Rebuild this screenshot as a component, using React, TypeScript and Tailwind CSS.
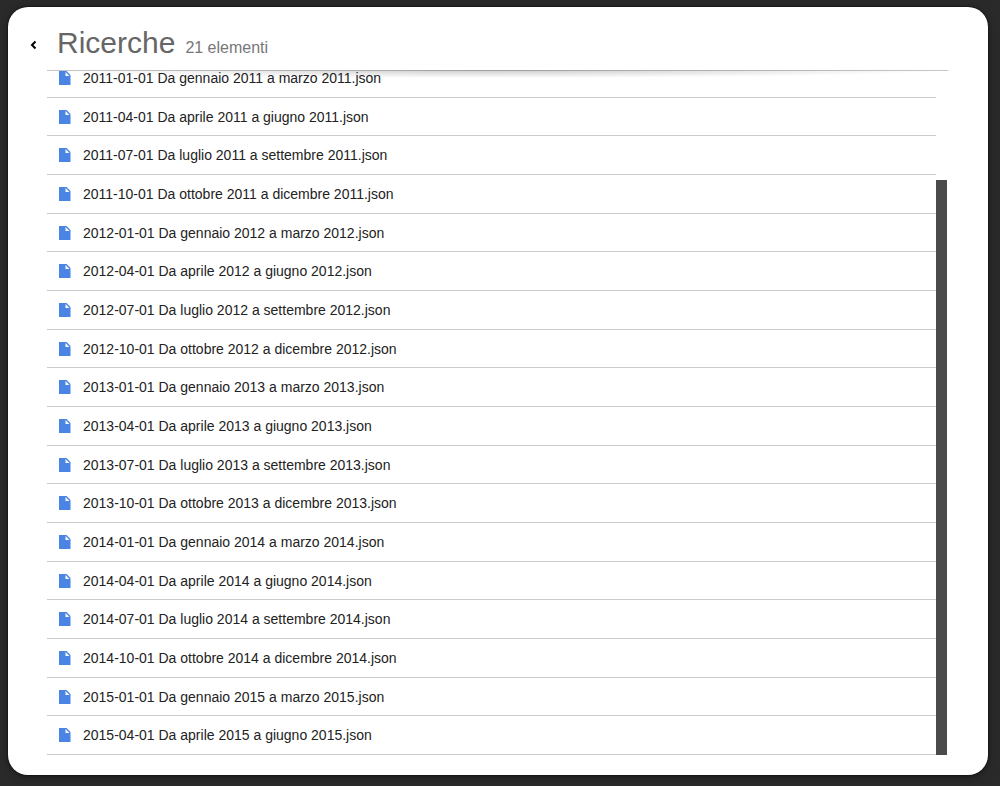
const files = [
  "2011-01-01 Da gennaio 2011 a marzo 2011.json",
  "2011-04-01 Da aprile 2011 a giugno 2011.json",
  "2011-07-01 Da luglio 2011 a settembre 2011.json",
  "2011-10-01 Da ottobre 2011 a dicembre 2011.json",
  "2012-01-01 Da gennaio 2012 a marzo 2012.json",
  "2012-04-01 Da aprile 2012 a giugno 2012.json",
  "2012-07-01 Da luglio 2012 a settembre 2012.json",
  "2012-10-01 Da ottobre 2012 a dicembre 2012.json",
  "2013-01-01 Da gennaio 2013 a marzo 2013.json",
  "2013-04-01 Da aprile 2013 a giugno 2013.json",
  "2013-07-01 Da luglio 2013 a settembre 2013.json",
  "2013-10-01 Da ottobre 2013 a dicembre 2013.json",
  "2014-01-01 Da gennaio 2014 a marzo 2014.json",
  "2014-04-01 Da aprile 2014 a giugno 2014.json",
  "2014-07-01 Da luglio 2014 a settembre 2014.json",
  "2014-10-01 Da ottobre 2014 a dicembre 2014.json",
  "2015-01-01 Da gennaio 2015 a marzo 2015.json",
  "2015-04-01 Da aprile 2015 a giugno 2015.json",
];

const TOTAL = 21;

const FileIcon = () => (
  <svg width="12" height="14" viewBox="0 0 12 14" className="shrink-0" aria-hidden="true">
    <path d="M0 0h7.500l4 4v10H0z" fill="#4a84e4" />
    <path d="M6.500 1v4h4z" fill="#fff" />
  </svg>
);

const FileRow = ({ name }: { name: string }) => (
  <li className="flex flex-1 border-b border-[#cbcbcb]">
    <a href="#" className="flex flex-1 items-center gap-3 pl-3">
      <FileIcon />
      <span className="whitespace-nowrap">{name}</span>
    </a>
  </li>
);

const App = () => {
  return (
    <div className="flex h-screen bg-[#2a2a2a] pt-[7px] pr-3 pb-[11px] pl-2 font-['Liberation_Sans',Arial,sans-serif]">
      <main className="flex flex-1 flex-col rounded-[20px] bg-white pr-10 pb-5 pl-[39px] shadow-[0_0_2px_#000,0_2px_8px_rgba(0,0,0,0.4)]">
        <header className="relative z-10 flex h-16 shrink-0 items-center border-b border-[#c6c6c6] pt-3">
          <button
            type="button"
            aria-label="Indietro"
            className="-ml-5 flex h-6 w-5 items-center"
          >
            <svg width="12" height="10" viewBox="0 0 12 10" aria-hidden="true">
              <path d="M8.500 1.500L5 5L8.500 8.500" fill="none" stroke="#000" strokeWidth="2" />
            </svg>
          </button>
          <div className="flex items-baseline gap-[10px] pb-1 pl-[10px] leading-9">
            <h1 className="text-3xl text-[#666]">Ricerche</h1>
            <span className="text-base text-[#777]">{TOTAL} elementi</span>
          </div>
          <div className="pointer-events-none absolute inset-x-0 top-full h-2 bg-[radial-gradient(50%_100%_at_50%_0%,rgba(0,0,0,0.2),transparent)]" />
        </header>
        <section className="flex min-h-0 flex-1 overflow-hidden pr-px">
          <ul className="-mt-3 flex flex-1 flex-col text-sm text-[#222]">
            {files.map((name) => (
              <FileRow key={name} name={name} />
            ))}
          </ul>
          <div className="flex w-[11px] flex-col justify-end">
            <div className="h-[84%] bg-[#4b4b4b]" />
          </div>
        </section>
      </main>
    </div>
  );
};

export default App;
